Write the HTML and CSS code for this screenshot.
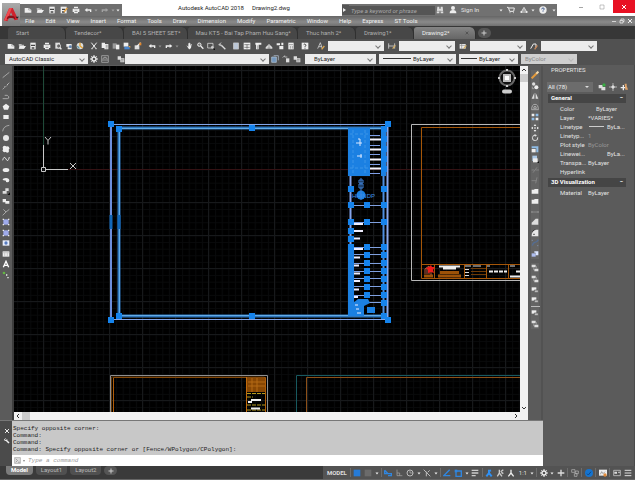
FILE: index.html
```html
<!DOCTYPE html>
<html lang="en">
<head>
<meta charset="utf-8">
<title>Autodesk AutoCAD 2018 - Drawing2.dwg</title>
<link rel="stylesheet" href="styles.css">
</head>
<body>
<svg class="defs" aria-hidden="true">
  <defs>
    <symbol id="new" viewBox="0 0 12 12"><path d="M1 3h6l4 3v4H1z" fill="#eee"/><path d="M7 3v3h4" stroke="#999" fill="none"/></symbol>
    <symbol id="open" viewBox="0 0 12 12"><path d="M1 3h4l1 1h3v2h2L9 10H2z" fill="#bbb"/><path d="M3 6h9l-3 4H1z" fill="#eee"/></symbol>
    <symbol id="save" viewBox="0 0 12 12"><path d="M2 1h8v10H2z" fill="#eee"/><path d="M3 4h6v2H3zM4 8h4v2H4z" fill="#444"/></symbol>
    <symbol id="saveas" viewBox="0 0 12 12"><path d="M1 1h9v10H1z" fill="#eee"/><path d="M3 4h5v2H3zM3 8h4v2H3z" fill="#444"/><path d="M6 9l5-6" stroke="#e7a03c" stroke-width="2"/></symbol>
    <symbol id="print" viewBox="0 0 12 12"><path d="M3 1h6v3h2v5H9v2H3V9H1V4h2z" fill="#eee"/><path d="M3 4h6M4 8h4" stroke="#555"/></symbol>
    <symbol id="preview" viewBox="0 0 12 12"><path d="M2 1h7v9H2z" fill="#ddd"/><circle cx="7" cy="6" r="3" fill="#666" stroke="#eee"/><path d="M9 8l2 3" stroke="#eee" stroke-width="2"/></symbol>
    <symbol id="publish" viewBox="0 0 12 12"><path d="M2 3h8v4H2zM4 8h6v3H4z" fill="#eee"/><circle cx="8" cy="7" r="2" fill="#5d82b0"/></symbol>
    <symbol id="dwf" viewBox="0 0 12 12"><circle cx="6" cy="6" r="5" fill="#ddd"/><path d="M6 1v5l4 3" stroke="#e0a030" stroke-width="2" fill="none"/><path d="M2 6l3 4" stroke="#69a" stroke-width="2"/></symbol>
    <symbol id="cut" viewBox="0 0 12 12"><path d="M2 1l7 9M10 1L3 10" stroke="#eee" stroke-width="1.5"/><path d="M2 10h2M8 10h2" stroke="#ccc" stroke-width="2"/></symbol>
    <symbol id="copy" viewBox="0 0 12 12"><path d="M1 1h5v8H1zM6 3h5v8H5z" fill="#eee"/><path d="M7 5h3M7 7h3M7 9h3" stroke="#777"/></symbol>
    <symbol id="paste" viewBox="0 0 12 12"><path d="M1 2h6v8H1z" fill="#999"/><path d="M6 4h5v7H6z" fill="#eee"/></symbol>
    <symbol id="match" viewBox="0 0 12 12"><path d="M1 1h7v6H1z" fill="#eee"/><path d="M2 7h8v4H2z" fill="#4a87d0"/><path d="M8 6h3v3" fill="#e8a94a"/></symbol>
    <symbol id="block" viewBox="0 0 12 12"><path d="M1 5h7v6H1z" fill="#ddd"/><path d="M4 7l6-6" stroke="#eee" stroke-width="2"/><path d="M8 1h3v4H8z" fill="#e2882e"/></symbol>
    <symbol id="undo" viewBox="0 0 12 12"><path d="M1 6l4-3v2h6v4H9V7H5v2z" fill="#eee"/></symbol>
    <symbol id="redo" viewBox="0 0 12 12"><path d="M11 6L7 3v2H1v4h2V7h4v2z" fill="#eee"/></symbol>
    <symbol id="pan" viewBox="0 0 12 12"><path d="M2 5l3 2V2h1v3-4h1v4-3h1v4l1-3h1l-1 6-2 2H6z" fill="#eee"/></symbol>
    <symbol id="zoom" viewBox="0 0 12 12"><circle cx="5" cy="4" r="2.500" fill="#777" stroke="#eee" stroke-width="1.500"/><path d="M7 6l4 4" stroke="#eee" stroke-width="2"/></symbol>
    <symbol id="zwin" viewBox="0 0 12 12"><path d="M1 2h8v7H1z" fill="none" stroke="#eee"/><circle cx="8" cy="8" r="2" fill="#ccc"/><path d="M12 9v3H9z" fill="#111"/></symbol>
    <symbol id="zprev" viewBox="0 0 12 12"><path d="M5 1L1 4l4 2M2 4h3" fill="none" stroke="#eee"/><path d="M5 5l6 6" stroke="#ddd" stroke-width="2"/></symbol>
    <symbol id="sheet" viewBox="0 0 12 12"><path d="M2 1h8v10H2z" fill="#eee"/><path d="M3 3h6M3 6h6M3 9h6" stroke="#5878a8"/></symbol>
    <symbol id="dc" viewBox="0 0 12 12"><path d="M1 1h10v10H1z" fill="#eee"/><path d="M2 4h8M2 8h8M6 4v6" stroke="#555"/></symbol>
    <symbol id="palette" viewBox="0 0 12 12"><path d="M2 1h9v3H7v7H3V4H2z" fill="#eee"/><path d="M5 5v6" stroke="#888"/></symbol>
    <symbol id="markup" viewBox="0 0 12 12"><path d="M1 8l5-5 5 5v2H1z" fill="#ddd"/><path d="M4 9h4M6 5v2" stroke="#555"/></symbol>
    <symbol id="ssm" viewBox="0 0 12 12"><path d="M1 2h5v3H1zM5 6h6v5H5zM8 1h3v4H8z" fill="#eee"/></symbol>
    <symbol id="calc" viewBox="0 0 12 12"><path d="M2 1h8v10H2z" fill="#eee"/><path d="M3 4h6M5 6v4M8 6v4" stroke="#777"/></symbol>
    <symbol id="helpbox" viewBox="0 0 12 12"><path d="M1 1h10v10H1z" fill="#eee"/><path d="M4 4q2-2 3 0t-1 3v1M6 9v1" stroke="#444" stroke-width="1.500" fill="none"/></symbol>
    <symbol id="astyle" viewBox="0 0 12 12"><path d="M1 10l4-9 3 9M3 7h4" fill="none" stroke="#eee"/><path d="M7 11l4-5" stroke="#dca64d" stroke-width="2"/></symbol>
    <symbol id="dimstyle" viewBox="0 0 12 12"><path d="M1 2v8M10 2v8M1 6h9" fill="none" stroke="#eee"/><path d="M7 10l4-5" stroke="#d5b067" stroke-width="2"/></symbol>
    <symbol id="tblstyle" viewBox="0 0 12 12"><path d="M1 3h9v7H1z" fill="#eee"/><path d="M1 5h9M4 3v7" stroke="#888"/><path d="M7 10l4-5" stroke="#d5b067" stroke-width="2"/></symbol>
    <symbol id="mldstyle" viewBox="0 0 12 12"><path d="M1 10l4-7h4v5" fill="none" stroke="#eee" stroke-width="1.500"/><path d="M7 11l4-6" stroke="#c9885a" stroke-width="2"/></symbol>
    <symbol id="gear" viewBox="0 0 12 12"><circle cx="6" cy="6" r="3" fill="none" stroke="#eee" stroke-width="2"/><path d="M6 0v3M6 9v3M0 6h3M9 6h3M2 2l2 2M8 8l2 2M10 2L8 4M4 8l-2 2" stroke="#eee" stroke-width="1.500"/></symbol>
    <symbol id="frame" viewBox="0 0 12 12"><path d="M1 1h10v10H1z" fill="none" stroke="#bbb"/><path d="M3 9V5l3-2 3 2v4M6 5v4" fill="none" stroke="#ccc"/></symbol>
    <symbol id="layers" viewBox="0 0 12 12"><path d="M1 2h5v5H1zM5 5h6v6H5z" fill="#ddd"/><path d="M6 7h4M6 9h4" stroke="#777"/></symbol>
    <symbol id="layerblue" viewBox="0 0 12 12"><path d="M1 3h7v8H1z" fill="#7397bd" stroke="#bcd"/><path d="M4 1h7v7" fill="none" stroke="#bcd"/></symbol>
    <symbol id="layerprev" viewBox="0 0 12 12"><path d="M6 5h5v6H6z" fill="#ddd"/><path d="M1 4l3-3v2h4" stroke="#ddd" fill="none"/></symbol>
    <symbol id="line" viewBox="0 0 12 12"><path d="M1 10l10-8" stroke="#ccc"/></symbol>
    <symbol id="cline" viewBox="0 0 12 12"><path d="M1 11l3-3M9 3l2-2M6 6h1" stroke="#ccc"/><path d="M4 7h1M8 4h1" stroke="#eee" stroke-width="2"/></symbol>
    <symbol id="pline" viewBox="0 0 12 12"><path d="M1 10h7q3 0 2-3-1-3-6-2" fill="none" stroke="#ccc"/></symbol>
    <symbol id="polygon" viewBox="0 0 12 12"><path d="M6 1l5 4-2 5H3L1 5z" fill="#eee"/></symbol>
    <symbol id="rect" viewBox="0 0 12 12"><path d="M2 3h8v6H2z" fill="#eee"/></symbol>
    <symbol id="arc" viewBox="0 0 12 12"><path d="M1 11q1-8 10-9" fill="none" stroke="#ccc"/></symbol>
    <symbol id="circle" viewBox="0 0 12 12"><circle cx="6" cy="6" r="4.500" fill="#e8e8e8"/></symbol>
    <symbol id="cloud" viewBox="0 0 12 12"><circle cx="4" cy="4" r="3" fill="#eee"/><circle cx="8" cy="5" r="3" fill="#eee"/><circle cx="4" cy="8" r="3" fill="#eee"/><circle cx="8" cy="9" r="2.500" fill="#eee"/></symbol>
    <symbol id="spline" viewBox="0 0 12 12"><path d="M1 8q2-8 5-2t5-3" fill="none" stroke="#ddd" stroke-width="1.500"/></symbol>
    <symbol id="ellipse" viewBox="0 0 12 12"><ellipse cx="6" cy="6" rx="5" ry="3" fill="#eee"/></symbol>
    <symbol id="earc" viewBox="0 0 12 12"><path d="M1 6q0-3 5-3t5 4q-1 3-5 2V7z" fill="#eee"/></symbol>
    <symbol id="insert" viewBox="0 0 12 12"><path d="M1 6h6v4H1zM5 2h5v4H5z" fill="#ddd"/><path d="M12 8v4H8z" fill="#111"/></symbol>
    <symbol id="mkblock" viewBox="0 0 12 12"><path d="M1 3h5v5H1zM5 6h6v4H5z" fill="#eee"/></symbol>
    <symbol id="point" viewBox="0 0 12 12"><path d="M2 2l4 4 5-4M6 6l-5 5" fill="none" stroke="#ccc"/></symbol>
    <symbol id="hatch" viewBox="0 0 12 12"><path d="M2 2h8v8H2z" fill="#9fabeb"/><path d="M1 1h2v2H1zM9 1h2v2H9zM1 9h2v2H1zM9 9h2v2H9z" fill="#eee"/></symbol>
    <symbol id="region" viewBox="0 0 12 12"><path d="M1 2h10v8H1z" fill="#e8eefc"/><circle cx="6" cy="6" r="2.500" fill="#567bc0"/></symbol>
    <symbol id="table" viewBox="0 0 12 12"><path d="M1 2h10v8H1z" fill="#eee"/><path d="M1 4h10M4 4v6M8 4v6" stroke="#bbb"/></symbol>
    <symbol id="mtext" viewBox="0 0 12 12"><path d="M2 11l4-9 4 9M3 8h6" fill="none" stroke="#fff" stroke-width="2"/></symbol>
    <symbol id="addsel" viewBox="0 0 12 12"><circle cx="3" cy="3" r="2" fill="#64b644"/><path d="M6 5h2v2H6zM8 9h2v2H8z" fill="#eee"/></symbol>
    <symbol id="erase" viewBox="0 0 12 12"><path d="M1 11l8-8" stroke="#e39a3c" stroke-width="3"/><path d="M8 4l3-3" stroke="#f3dcb0" stroke-width="3"/></symbol>
    <symbol id="copyobj" viewBox="0 0 12 12"><circle cx="4" cy="3" r="2.500" fill="#ddd"/><circle cx="8" cy="8" r="3" fill="#eee"/><path d="M2 7v3h3" stroke="#bbb" fill="none"/></symbol>
    <symbol id="mirror" viewBox="0 0 12 12"><path d="M5 1v9H1zM7 1v9h4z" fill="#ddd"/></symbol>
    <symbol id="offset" viewBox="0 0 12 12"><path d="M1 10h10q0-8-5-8t-5 8M4 8q0-3 2-3t2 3z" fill="none" stroke="#ccc"/></symbol>
    <symbol id="array" viewBox="0 0 12 12"><path d="M1 1h4v4H1zM7 7h4v4H7z" fill="#eee"/><path d="M7 1h4v4H7zM1 7h4v4H1z" fill="#8fbde8"/></symbol>
    <symbol id="move" viewBox="0 0 12 12"><path d="M6 0l2 3H4zM6 12l2-3H4zM0 6l3-2v4zM12 6L9 4v4zM5 5h2v2H5z" fill="#eee"/></symbol>
    <symbol id="rotate" viewBox="0 0 12 12"><path d="M7 2a4 4 0 1 0 3 3" fill="none" stroke="#ddd" stroke-width="1.500"/><path d="M5 0l4 2-3 2z" fill="#ddd"/></symbol>
    <symbol id="scale" viewBox="0 0 12 12"><path d="M1 2h10v9H8V5H1z" fill="#8ebbe4"/><path d="M1 6h6v5H1z" fill="#eee"/></symbol>
    <symbol id="stretch" viewBox="0 0 12 12"><path d="M2 1h7v8H2z" fill="#aac7e5"/><path d="M3 5h7v6H3z" fill="#eee"/><path d="M12 9v3H9z" fill="#111"/></symbol>
    <symbol id="trim" viewBox="0 0 12 12"><path d="M1 6h4M7 6h5M3 10l6-8" stroke="#929292"/></symbol>
    <symbol id="extend" viewBox="0 0 12 12"><path d="M1 7h7M9 2L7 11" stroke="#929292"/></symbol>
    <symbol id="break" viewBox="0 0 12 12"><path d="M1 4h3l2-1h5v7H1z" fill="#eee"/></symbol>
    <symbol id="join" viewBox="0 0 12 12"><path d="M0 6h4M5 6h2M8 6h4" stroke="#bbb"/></symbol>
    <symbol id="chamfer" viewBox="0 0 12 12"><path d="M1 10V7l6-6h4v9z" fill="#ddd"/></symbol>
    <symbol id="fillet" viewBox="0 0 12 12"><path d="M1 11q0-9 7-10h3v10z" fill="#e8e8e8"/><path d="M2 4l3-3M3 8h3" stroke="#222"/></symbol>
    <symbol id="blend" viewBox="0 0 12 12"><path d="M2 10q1-5 4-5t5-4" fill="none" stroke="#536d94" stroke-width="2"/><path d="M1 2h2M9 10h2" stroke="#89b"/></symbol>
    <symbol id="explode" viewBox="0 0 12 12"><path d="M1 5h6v5H1z" fill="#aebef0"/><path d="M5 2h6v6H7V4H5z" fill="#dde6ff"/></symbol>
    <symbol id="front" viewBox="0 0 12 12"><path d="M1 1h6v4H1zM5 7h6v4H5z" fill="#ddd"/><path d="M4 5v4h2M8 3v4" fill="none" stroke="#aaa"/></symbol>
    <symbol id="back" viewBox="0 0 12 12"><path d="M1 2h7v5H1z" fill="#eee"/><path d="M5 6h6v4H5z" fill="#bbb" stroke="#555"/></symbol>
    <symbol id="tdown" viewBox="0 0 12 12"><path d="M3 5h6l-3 4z" fill="#eee"/></symbol>
    <symbol id="binoc" viewBox="0 0 12 12"><path d="M2 1h3v3h2V1h3l1 10H7V7H5v4H1z" fill="#ddd"/><path d="M2 8h2M8 8h2" stroke="#666"/></symbol>
    <symbol id="user" viewBox="0 0 12 12"><circle cx="6" cy="3" r="3" fill="#eee"/><path d="M1 11q0-5 5-5t5 5z" fill="#eee"/></symbol>
    <symbol id="cart" viewBox="0 0 12 12"><path d="M0 2h2l2 6h6l1-5H3M4 10h1M9 10h1" fill="none" stroke="#eee" stroke-width="1.500"/></symbol>
    <symbol id="share" viewBox="0 0 12 12"><path d="M6 2l4 7H2zM4 6h4" fill="none" stroke="#ddd" stroke-width="1.500"/><circle cx="2" cy="9" r="1.500" fill="#eee"/><circle cx="10" cy="9" r="1.500" fill="#eee"/></symbol>
    <symbol id="help" viewBox="0 0 12 12"><circle cx="6" cy="6" r="5.500" fill="#eee"/><path d="M4 5q0-2 2-2t2 1.500L6 7M6 8v1" fill="none" stroke="#4a6494" stroke-width="1.500"/></symbol>
    <symbol id="min" viewBox="0 0 12 12"><path d="M2 7h8" stroke="currentColor" stroke-width="1.500"/></symbol>
    <symbol id="max" viewBox="0 0 12 12"><path d="M2 2h8v8H2z" fill="none" stroke="currentColor"/></symbol>
    <symbol id="restore" viewBox="0 0 12 12"><path d="M2 5h6v5H2zM4 5V2h6v5H8" fill="none" stroke="currentColor" stroke-width="1.500"/></symbol>
    <symbol id="x" viewBox="0 0 12 12"><path d="M2 2l8 8M10 2l-8 8" stroke="currentColor" stroke-width="2"/></symbol>
    <symbol id="plus" viewBox="0 0 12 12"><path d="M6 1v10M1 6h10" stroke="currentColor" stroke-width="2"/></symbol>
    <symbol id="wrench" viewBox="0 0 12 12"><path d="M4 4l6 6" stroke="#eee" stroke-width="3"/><path d="M1 4q3 3 5-1M3 1q-3 1-1 4" fill="none" stroke="#eee" stroke-width="2"/></symbol>
    <symbol id="prompt" viewBox="0 0 12 12"><path d="M1 1h10v10H1z" fill="#ddd" stroke="#999"/><path d="M3 3l3 3-3 3M7 9h3" fill="none" stroke="#777"/></symbol>
    <symbol id="gridon" viewBox="0 0 12 12"><path d="M1 1h10v10H1z" fill="#267bd8"/></symbol>
    <symbol id="snap" viewBox="0 0 12 12"><path d="M1 1h10v10H1z" fill="#6b6b6b"/></symbol>
    <symbol id="infer" viewBox="0 0 12 12"><path d="M1 2v5h10v3H6M1 2l5 5" fill="none" stroke="#2f86e0" stroke-width="2"/></symbol>
    <symbol id="ortho" viewBox="0 0 12 12"><path d="M3 1v9h8M3 6h4v4" fill="none" stroke="#aaa"/></symbol>
    <symbol id="polar" viewBox="0 0 12 12"><circle cx="6" cy="6" r="4.500" fill="none" stroke="#bbb" stroke-width="1.500"/><path d="M6 6V3M6 6h5" stroke="#bbb"/></symbol>
    <symbol id="iso" viewBox="0 0 12 12"><path d="M1 1l10 10M5 4v7M7 5l3-3" fill="none" stroke="#bbb" stroke-width="1.500"/></symbol>
    <symbol id="otrack" viewBox="0 0 12 12"><path d="M10 1L1 10h10" fill="none" stroke="#2f86e0" stroke-width="2"/></symbol>
    <symbol id="osnap" viewBox="0 0 12 12"><path d="M3 3h8v8H3z" fill="none" stroke="#2f86e0" stroke-width="2"/><path d="M1 1h4v4H1z" fill="#2f86e0"/></symbol>
    <symbol id="lw" viewBox="0 0 12 12"><path d="M1 2h10M1 6h10M1 10h6" stroke="#ccc" stroke-width="2"/></symbol>
    <symbol id="annob" viewBox="0 0 12 12"><path d="M6 1v5l-4 5M6 6l4 5M6 3l3-1" fill="none" stroke="#2f90f4" stroke-width="3"/></symbol>
    <symbol id="anno" viewBox="0 0 12 12"><path d="M5 1v5l-3 5M5 6l4 5M7 4l4-3M8 5l3 2" fill="none" stroke="#ccc" stroke-width="2"/></symbol>
    <symbol id="annow" viewBox="0 0 12 12"><path d="M6 1v5l-4 5M6 6l4 5" fill="none" stroke="#eee" stroke-width="2"/></symbol>
    <symbol id="units" viewBox="0 0 12 12"><path d="M1 1h5v4H1zM7 3h4v4H7zM5 7h4v4H5z" fill="none" stroke="#bbb"/></symbol>
    <symbol id="accel" viewBox="0 0 12 12"><circle cx="6" cy="6" r="6" fill="#1573ce"/><path d="M3 7l2 2 4-5" stroke="#0b488a" fill="none" stroke-width="1.500"/></symbol>
    <symbol id="perf" viewBox="0 0 12 12"><path d="M0 1h12v9H0z" fill="#eee"/><path d="M2 8l2-4 2 3 3-3" stroke="#777" fill="none"/><circle cx="9" cy="9" r="2.500" fill="#e08a3a"/></symbol>
    <symbol id="clean" viewBox="0 0 12 12"><path d="M1 2h10v8H1z" fill="none" stroke="#ddd"/><path d="M2 4h4v3H2zM8 4h2v2H8z" fill="#ddd"/></symbol>
    <symbol id="menu" viewBox="0 0 12 12"><path d="M1 2h10M1 6h10M1 10h10" stroke="#ddd" stroke-width="1.500"/></symbol>
    <symbol id="qsel" viewBox="0 0 12 12"><path d="M1 3h6v5H1zM5 6h6v5H5z" fill="#ddd"/><circle cx="9" cy="3" r="2.500" fill="#37ad42"/></symbol>
    <symbol id="pick" viewBox="0 0 12 12"><path d="M6 0v12M0 6h12" stroke="#ddd"/><path d="M6 3l3 3-3 3-3-3z" fill="#ddd"/></symbol>
    <symbol id="pickadd" viewBox="0 0 12 12"><path d="M5 3v8M1 7h9" stroke="#eee" stroke-width="2"/><path d="M7 1h3v3l2 6H8z" fill="#e0a46a"/></symbol>
  </defs>
</svg>

<div class="app">
  <header class="header">
    <button class="app-button" aria-label="Application menu">
      <svg viewBox="0 0 18 20"><path d="M1 16L7 2h4l6 13-4 1-4-9-4 10z" fill="#d0232e"/><path d="M7 2h3L5 15l-4 2z" fill="#f04a50"/><path d="M5 12q4-3 8 0l1 3q-5-3-10 0z" fill="#8c1018"/><path d="M14 12h4l-2 2z" fill="#222"/></svg>
    </button>
    <div class="title-row">
      <div class="quick-access">
        <button aria-label="New"><svg><use href="#new"/></svg></button>
        <button aria-label="Open"><svg><use href="#open"/></svg></button>
        <button aria-label="Save"><svg><use href="#save"/></svg></button>
        <button aria-label="Save as"><svg><use href="#saveas"/></svg></button>
        <button aria-label="Plot"><svg><use href="#print"/></svg></button>
        <button aria-label="Undo"><svg><use href="#undo"/></svg></button>
        <button class="caret dim" aria-label="Undo list"><svg><use href="#tdown"/></svg></button>
        <button class="dim" aria-label="Redo"><svg><use href="#redo"/></svg></button>
        <button class="caret dim" aria-label="Redo list"><svg><use href="#tdown"/></svg></button>
        <button class="caret" aria-label="Customize"><svg><use href="#tdown"/></svg></button>
      </div>
      <h1 class="title"><span>Autodesk AutoCAD 2018</span><span>Drawing2.dwg</span></h1>
      <div class="infocenter">
        <button class="play" aria-label="Expand search"></button>
        <input class="search" type="text" aria-label="Search help" placeholder="Type a keyword or phrase">
        <button aria-label="Search"><svg><use href="#binoc"/></svg></button>
        <button class="wide" aria-label="Account"><svg><use href="#user"/></svg></button>
        <a class="signin" href="#">Sign In</a>
        <button class="caret" aria-label="Account menu"><svg><use href="#tdown"/></svg></button>
        <button class="wide" aria-label="Store"><svg><use href="#cart"/></svg></button>
        <button aria-label="A360"><svg><use href="#share"/></svg></button>
        <button class="caret" aria-label="A360 menu"><svg><use href="#tdown"/></svg></button>
        <button class="wide" aria-label="Help"><svg><use href="#help"/></svg></button>
        <button class="caret" aria-label="Help menu"><svg><use href="#tdown"/></svg></button>
      </div>
      <div class="window-controls">
        <button aria-label="Minimize"><svg><use href="#min"/></svg></button>
        <button aria-label="Maximize"><svg><use href="#max"/></svg></button>
        <button class="close" aria-label="Close"><svg><use href="#x"/></svg></button>
      </div>
    </div>
    <nav class="menubar">
      <a href="#">File</a><a href="#">Edit</a><a href="#">View</a><a href="#">Insert</a><a href="#">Format</a><a href="#">Tools</a><a href="#">Draw</a><a href="#">Dimension</a><a href="#">Modify</a><a href="#">Parametric</a><a href="#">Window</a><a href="#">Help</a><a href="#">Express</a><a href="#">ST Tools</a>
      <div class="doc-controls">
        <button aria-label="Minimize drawing"><svg><use href="#min"/></svg></button>
        <button aria-label="Restore drawing"><svg><use href="#restore"/></svg></button>
        <button aria-label="Close drawing"><svg><use href="#x"/></svg></button>
      </div>
    </nav>
  </header>

  <nav class="tabs">
    <a class="tab" href="#">Start</a>
    <a class="tab" href="#">Tendecor*</a>
    <a class="tab" href="#">BAI 5 SHEET SET*</a>
    <a class="tab" href="#">Mau KT5 - Bai Tap Pham Huu Sang*</a>
    <a class="tab" href="#">Thuc hanh 2*</a>
    <a class="tab" href="#">Drawing1*</a>
    <a class="tab active" href="#">Drawing2*<svg><use href="#x"/></svg></a>
    <button class="add" aria-label="New drawing"><svg><use href="#plus"/></svg></button>
  </nav>

  <div class="toolbar">
    <div class="group">
      <button aria-label="New"><svg><use href="#new"/></svg></button>
      <button aria-label="Open"><svg><use href="#open"/></svg></button>
      <button aria-label="Save"><svg><use href="#save"/></svg></button>
    </div>
    <div class="group">
      <button aria-label="Plot"><svg><use href="#print"/></svg></button>
      <button aria-label="Preview"><svg><use href="#preview"/></svg></button>
      <button aria-label="Publish"><svg><use href="#publish"/></svg></button>
      <button aria-label="3D DWF"><svg><use href="#dwf"/></svg></button>
    </div>
    <div class="group">
      <button aria-label="Cut"><svg><use href="#cut"/></svg></button>
      <button aria-label="Copy"><svg><use href="#copy"/></svg></button>
      <button aria-label="Paste"><svg><use href="#paste"/></svg></button>
      <button aria-label="Match properties"><svg><use href="#match"/></svg></button>
      <button aria-label="Block editor"><svg><use href="#block"/></svg></button>
    </div>
    <div class="group">
      <button aria-label="Undo"><svg><use href="#undo"/></svg></button>
      <button class="caret dim" aria-label="Undo list"><svg><use href="#tdown"/></svg></button>
      <button aria-label="Redo"><svg><use href="#redo"/></svg></button>
      <button class="caret dim" aria-label="Redo list"><svg><use href="#tdown"/></svg></button>
    </div>
    <div class="group">
      <button aria-label="Pan"><svg><use href="#pan"/></svg></button>
      <button aria-label="Zoom"><svg><use href="#zoom"/></svg></button>
      <button aria-label="Zoom window"><svg><use href="#zwin"/></svg></button>
      <button aria-label="Zoom previous"><svg><use href="#zprev"/></svg></button>
    </div>
    <div class="group">
      <button aria-label="Properties"><svg><use href="#sheet"/></svg></button>
      <button aria-label="Design center"><svg><use href="#dc"/></svg></button>
      <button aria-label="Tool palettes"><svg><use href="#palette"/></svg></button>
      <button aria-label="Markup"><svg><use href="#markup"/></svg></button>
      <button aria-label="Sheet set manager"><svg><use href="#ssm"/></svg></button>
      <button aria-label="Calculator"><svg><use href="#calc"/></svg></button>
    </div>
    <div class="group">
      <button aria-label="Help"><svg><use href="#helpbox"/></svg></button>
    </div>
    <div class="group">
      <button class="wide" aria-label="Text style"><svg><use href="#astyle"/></svg></button>
      <label class="combo"><select aria-label="Text style name"><option></option></select></label>
      <button class="wide" aria-label="Dimension style"><svg><use href="#dimstyle"/></svg></button>
      <label class="combo"><select aria-label="Dimension style name"><option></option></select></label>
      <button class="wide" aria-label="Table style"><svg><use href="#tblstyle"/></svg></button>
      <label class="combo"><select aria-label="Table style name"><option></option></select></label>
      <button class="wide" aria-label="Multileader style"><svg><use href="#mldstyle"/></svg></button>
      <label class="combo"><select aria-label="Multileader style name"><option></option></select></label>
    </div>
  </div>

  <div class="toolbar">
    <div class="group">
      <label class="combo workspace"><select aria-label="Workspace"><option>AutoCAD Classic</option></select></label>
      <button aria-label="Workspace settings"><svg><use href="#gear"/></svg></button>
      <button aria-label="My workspace"><svg><use href="#frame"/></svg></button>
    </div>
    <div class="group">
      <button class="wide" aria-label="Layer properties"><svg><use href="#layers"/></svg></button>
      <label class="combo layer"><select aria-label="Layer"><option></option></select></label>
      <button aria-label="Make layer current"><svg><use href="#layerblue"/></svg></button>
      <button aria-label="Layer previous"><svg><use href="#layerprev"/></svg></button>
      <button aria-label="Layer states"><svg><use href="#layers"/></svg></button>
    </div>
    <div class="group spaced">
      <label class="combo color"><select aria-label="Color"><option>ByLayer</option></select></label>
      <label class="combo linetype"><span class="sample"></span><select aria-label="Linetype"><option>ByLayer</option></select></label>
      <label class="combo weight"><span class="sample"></span><select aria-label="Lineweight"><option>ByLayer</option></select></label>
      <label class="combo disabled"><select aria-label="Plot style" disabled><option>ByColor</option></select></label>
    </div>
  </div>

  <main class="main">
    <div class="work">
      <div class="workspace-row">
        <div class="draw-bar">
          <div class="stack draw">
            <button aria-label="Line"><svg><use href="#line"/></svg></button>
            <button aria-label="Construction line"><svg><use href="#cline"/></svg></button>
            <button aria-label="Polyline"><svg><use href="#pline"/></svg></button>
            <button aria-label="Polygon"><svg><use href="#polygon"/></svg></button>
            <button aria-label="Rectangle"><svg><use href="#rect"/></svg></button>
            <button aria-label="Arc"><svg><use href="#arc"/></svg></button>
            <button aria-label="Circle"><svg><use href="#circle"/></svg></button>
            <button aria-label="Revision cloud"><svg><use href="#cloud"/></svg></button>
            <button aria-label="Spline"><svg><use href="#spline"/></svg></button>
            <button aria-label="Ellipse"><svg><use href="#ellipse"/></svg></button>
            <button aria-label="Ellipse arc"><svg><use href="#earc"/></svg></button>
            <button aria-label="Insert block"><svg><use href="#insert"/></svg></button>
            <button aria-label="Make block"><svg><use href="#mkblock"/></svg></button>
            <button aria-label="Point"><svg><use href="#point"/></svg></button>
            <button aria-label="Hatch"><svg><use href="#hatch"/></svg></button>
            <button aria-label="Gradient"><svg><use href="#hatch"/></svg></button>
            <button aria-label="Region"><svg><use href="#region"/></svg></button>
            <button aria-label="Table"><svg><use href="#table"/></svg></button>
            <button aria-label="Multiline text"><svg><use href="#mtext"/></svg></button>
            <button aria-label="Add selected"><svg><use href="#addsel"/></svg></button>
          </div>
        </div>
        <div class="viewport">
          <svg class="drawing" viewBox="14 66 506 346" preserveAspectRatio="xMinYMin slice">
            <defs>
              <pattern id="minor" x="43.500" y="169.500" width="6.600" height="6.600" patternUnits="userSpaceOnUse"><path d="M0 .5h6.600M.5 0v6.600" stroke="#090a0b"/></pattern>
              <pattern id="major" x="43" y="169" width="33" height="33" patternUnits="userSpaceOnUse"><path d="M0 .5h33M.5 0v33" stroke="#17191b"/></pattern>
              <path id="g" d="M-3-3h6v6h-6z" fill="#1583ec"/>
            </defs>
            <rect x="14" y="66" width="506" height="346" fill="#000"/>
            <rect x="14" y="66" width="506" height="346" fill="url(#minor)"/>
            <rect x="14" y="66" width="506" height="346" fill="url(#major)"/>
            <path d="M43.500 66v80" stroke="#1f4a38"/>
            <path d="M68 169.500h452" stroke="#351214"/>
            <path d="M43.500 145v22M46 169.500h22M41.500 167.500h4v4h-4z" stroke="#c8c8c8" fill="none"/>
            <path d="M45 137l3 3.500 3-3.500M48 140.500v4M70 163l6 6M76 163l-6 6" stroke="#c8c8c8" fill="none"/>

            <g fill="none">
              <path d="M520 124.500H411.500v156H520" stroke="#b8b8b8"/>
              <path d="M520 127.500H421.500v151H520M421.500 264.500H520M434.500 264v14M464.500 264v14M486.500 264v14M508.500 264v14" stroke="#a55608"/>
              <path d="M471 268.500h15M471 271.500h15M471 274.500h15" stroke="#6e3a06"/>
              <path d="M439 266.500h21M443 268.500h13" stroke="#eee" stroke-width="2"/>
              <path d="M440 272.500h19M438 276h23M424 276h9" stroke="#9c5208" stroke-width="3"/>
              <path d="M465 266h6M473 266h8M465 269.500h4M465 272.500h4M465 275.500h4M487 266h3M510 266h5" stroke="#ddd"/>
              <path d="M489 271.500h18M516 271.500h4" stroke="#eee" stroke-width="2" stroke-dasharray="4 1"/>
              <path d="M510 276.500h10" stroke="#eee" stroke-width="2"/>
              <path d="M425 274v-5l4-3v8M427 268v6M431 270v5" stroke="#b85b3a"/>
            </g>
            <path d="M431 265l1 2 3 0-2 3 1 3-3-1-3 1 0-3-2-2 3-1z" fill="#ef1c1c"/>

            <g fill="none">
              <path d="M110.500 412v-36.500h157V412" stroke="#8f8f8f"/>
              <path d="M113.500 412v-34.500h152V412" stroke="#b05c08"/>
              <path d="M111.500 412v-35h153" stroke="#5b3408"/>
              <path d="M246.500 377v35" stroke="#c06a0c"/>
            </g>
            <path d="M247 378h18v14h-18z" fill="#874704"/>
            <path d="M248 382h17M248 386h17M252 378v14M257 378v14" stroke="#b46a14" fill="none"/>
            <path d="M247 393.500h18M247 397h6M247 405h18M247 410h18" stroke="#b59a1c" stroke-dasharray="4 1"/>
            <path d="M251 400h10M248 402h4M251 408.500h9" stroke="#eee" stroke-width="2"/>
            <path d="M296.500 412v-36.500H520" fill="none" stroke="#17595f"/>
            <path d="M306.500 412v-34.500H520" fill="none" stroke="#8c5018"/>

            <g fill="none">
              <path d="M111 124.500h277M111 319.500h277" stroke="#82a6ea"/>
              <path d="M111 124v196" stroke="#6d8fdc" stroke-width="2"/>
              <path d="M119 128h265M119 316h265M119 128v188" stroke="#2e76bd" stroke-width="3"/>
              <path d="M119 128.500h265M119 315.500h265M119.500 128v188" stroke="#62abe5"/>
              <path d="M387.500 124v196" stroke="#8aa8ec" stroke-width="2"/>
              <path d="M383.500 128v188" stroke="#4e8fe0" stroke-width="2"/>
              <path d="M350.500 176v70" stroke="#86a4ea" stroke-width="2"/>
              <path d="M350 205.500h34M350 222.500h34M350 247.500h34M350 254.500h34M350 263.500h34M350 271.500h34M350 278.500h34M350 286.500h34M350 295.500h34M350 302.500h34" stroke="#7fa0e0"/>
              <path d="M370 135.500h10M370 145.500h10M370 154.500h10M370 164.500h10M370 173.500h10" stroke="#7f9fe8"/>
              <path d="M369 139.500h12M369 149.500h12M369 159.500h12M369 168.500h12" stroke="#f4f4ff" stroke-width="2"/>
              <path d="M354 224h9M354 231h9M354 238.500h6M354 249h9M354 257.500h6M354 265.500h5M354 273.500h6M354 281h6M354 289.500h5M354 297h4" stroke="#eef" stroke-width="2"/>
              <path d="M111 215v14M119 215v14" stroke="#1267b8" stroke-width="3"/>
            </g>
            <path d="M348 128h22v48h-22zM348 245h6v71h-6zM353 303l5-4h10l2 4-6 3v10h-11zM367 307h8v6h-8z" fill="#1b80e2"/>
            <path d="M350 134h18M350 168h18M353 130v44M365 130v44" stroke="#3d95e8" stroke-dasharray="3 2"/>
            <path d="M358 139h2v7M356 143h6M357 156h5M361 154v4" stroke="#dce8ff" fill="none"/>
            <path d="M356 309h3M357 313h4M355 305h3" stroke="#eef"/>
            <circle cx="361" cy="195" r="4.500" fill="#1b80e2"/>
            <path d="M361 178v22M359 180h4v3h-4zM359 184h4v4h-4z" stroke="#3f82d8" fill="none"/>
            <text class="stamp" x="352" y="198">HHINDP</text>
            <path d="M381 128h5v48h-5z" fill="#1b80e2"/>
            <use href="#g" x="111" y="124"/><use href="#g" x="119" y="129"/><use href="#g" x="252" y="128"/><use href="#g" x="388" y="124"/>
            <use href="#g" x="111" y="320"/><use href="#g" x="119" y="316"/><use href="#g" x="252" y="316"/><use href="#g" x="388" y="320"/>
            <use href="#g" x="384" y="129"/><use href="#g" x="384" y="139"/><use href="#g" x="384" y="149"/><use href="#g" x="384" y="159"/><use href="#g" x="384" y="169"/>
            <use href="#g" x="351" y="189"/><use href="#g" x="384" y="189"/>
            <use href="#g" x="351" y="205"/><use href="#g" x="367" y="205"/><use href="#g" x="384" y="205"/>
            <use href="#g" x="351" y="222"/><use href="#g" x="367" y="222"/><use href="#g" x="384" y="222"/>
            <use href="#g" x="351" y="231"/><use href="#g" x="351" y="239"/>
            <use href="#g" x="351" y="247"/><use href="#g" x="367" y="247"/><use href="#g" x="384" y="247"/>
            <use href="#g" x="367" y="255"/><use href="#g" x="384" y="255"/>
            <use href="#g" x="367" y="263"/><use href="#g" x="384" y="263"/>
            <use href="#g" x="367" y="271"/><use href="#g" x="384" y="271"/>
            <use href="#g" x="367" y="279"/><use href="#g" x="384" y="279"/>
            <use href="#g" x="367" y="287"/><use href="#g" x="384" y="287"/>
            <use href="#g" x="367" y="295"/><use href="#g" x="384" y="295"/>
            <use href="#g" x="384" y="303"/><use href="#g" x="384" y="316"/>

            <circle cx="507" cy="78" r="7.500" fill="#111" stroke="#666" stroke-width="2"/>
            <path d="M507 69v2M507 85v2M498 78h2M514 78h2" stroke="#ccc" stroke-width="2"/>
            <rect x="503" y="74" width="8" height="8" fill="#bbb"/>
            <rect x="505" y="76" width="4" height="4" fill="#fff"/>
            <rect x="502" y="89.500" width="10" height="4" rx="2" fill="#ccc"/>
          </svg>
          <div class="vscroll"><svg viewBox="0 0 8 8"><path d="M2 5l2-2 2 2"/></svg><span class="thumb"></span><svg class="end" viewBox="0 0 8 8"><path d="M2 3l2 2 2-2"/></svg></div>
          <div class="hscroll"><svg viewBox="0 0 8 8"><path d="M5 2L3 4l2 2"/></svg><span class="thumb"></span><svg class="end" viewBox="0 0 8 8"><path d="M3 2l2 2-2 2"/></svg></div>
        </div>
        <div class="modify-bar">
          <div class="stack modify">
            <button aria-label="Erase"><svg><use href="#erase"/></svg></button>
            <button aria-label="Copy object"><svg><use href="#copyobj"/></svg></button>
            <button aria-label="Mirror"><svg><use href="#mirror"/></svg></button>
            <button aria-label="Offset"><svg><use href="#offset"/></svg></button>
            <button aria-label="Array"><svg><use href="#array"/></svg></button>
            <button aria-label="Move"><svg><use href="#move"/></svg></button>
            <button aria-label="Rotate"><svg><use href="#rotate"/></svg></button>
            <button aria-label="Scale"><svg><use href="#scale"/></svg></button>
            <button aria-label="Stretch"><svg><use href="#stretch"/></svg></button>
            <button aria-label="Trim"><svg><use href="#trim"/></svg></button>
            <button aria-label="Extend"><svg><use href="#extend"/></svg></button>
            <button aria-label="Break at point"><svg><use href="#break"/></svg></button>
            <button aria-label="Break"><svg><use href="#break"/></svg></button>
            <button aria-label="Join"><svg><use href="#join"/></svg></button>
            <button aria-label="Chamfer"><svg><use href="#chamfer"/></svg></button>
            <button aria-label="Fillet"><svg><use href="#fillet"/></svg></button>
            <button aria-label="Blend curves"><svg><use href="#blend"/></svg></button>
            <button aria-label="Explode"><svg><use href="#explode"/></svg></button>
          </div>
          <div class="stack order">
            <button aria-label="Bring to front"><svg><use href="#front"/></svg></button>
            <button aria-label="Send to back"><svg><use href="#front"/></svg></button>
            <button aria-label="Bring above"><svg><use href="#back"/></svg></button>
            <button aria-label="Send under"><svg><use href="#back"/></svg></button>
            <hr>
            <button aria-label="Text to front"><svg><use href="#back"/></svg></button>
            <button aria-label="Hatch to back"><svg><use href="#front"/></svg></button>
          </div>
        </div>
      </div>
      <section class="command">
        <div class="command-side">
          <button aria-label="Close command line"><svg><use href="#x"/></svg></button>
          <button aria-label="Command settings"><svg><use href="#wrench"/></svg></button>
        </div>
        <div class="command-body">
          <div class="history">
            <p>Specify opposite corner:</p>
            <p>Command:</p>
            <p>Command:</p>
            <p>Command: Specify opposite corner or [Fence/WPolygon/CPolygon]:</p>
          </div>
          <div class="entry"><svg><use href="#prompt"/></svg><span class="tick"></span><input type="text" aria-label="Command" placeholder="Type a command"></div>
        </div>
      </section>
    </div>

    <aside class="properties">
      <h2>PROPERTIES</h2>
      <div class="selection">
        <label class="combo dark"><select aria-label="Selected objects"><option>All (78)</option></select></label>
        <button aria-label="Toggle pick add"><svg><use href="#qsel"/></svg></button>
        <button aria-label="Select objects"><svg><use href="#pick"/></svg></button>
        <button aria-label="Quick select"><svg><use href="#pickadd"/></svg></button>
      </div>
      <h3>General<span>−</span></h3>
      <table>
        <tr><th>Color</th><td class="swatch">ByLayer</td></tr>
        <tr><th>Layer</th><td>*VARIES*</td></tr>
        <tr><th>Linetype</th><td><span class="sample"></span>ByLa...</td></tr>
        <tr><th>Linetyp...</th><td class="muted">1</td></tr>
        <tr><th>Plot style</th><td class="muted">ByColor</td></tr>
        <tr><th>Linewei...</th><td><span class="sample blank"></span>ByLa...</td></tr>
        <tr><th>Transpa...</th><td>ByLayer</td></tr>
        <tr><th>Hyperlink</th><td></td></tr>
      </table>
      <h3>3D Visualization<span>−</span></h3>
      <table>
        <tr><th>Material</th><td>ByLayer</td></tr>
      </table>
    </aside>
  </main>

  <footer class="status">
    <nav class="layouts">
      <a class="active" href="#">Model</a>
      <a href="#">Layout1</a>
      <a href="#">Layout2</a>
      <button class="add" aria-label="New layout"><svg><use href="#plus"/></svg></button>
    </nav>
    <div class="status-tools">
      <button class="text bold">MODEL</button>
      <i></i>
      <button aria-label="Grid"><svg><use href="#gridon"/></svg></button>
      <button aria-label="Snap"><svg><use href="#snap"/></svg></button>
      <button class="caret" aria-label="Snap menu"><svg><use href="#tdown"/></svg></button>
      <i></i>
      <button aria-label="Dynamic input"><svg><use href="#infer"/></svg></button>
      <button aria-label="Ortho"><svg><use href="#ortho"/></svg></button>
      <button aria-label="Polar"><svg><use href="#polar"/></svg></button>
      <button class="caret" aria-label="Polar menu"><svg><use href="#tdown"/></svg></button>
      <button aria-label="Isometric"><svg><use href="#iso"/></svg></button>
      <button class="caret" aria-label="Isometric menu"><svg><use href="#tdown"/></svg></button>
      <i></i>
      <button aria-label="Object snap tracking"><svg><use href="#otrack"/></svg></button>
      <button aria-label="Object snap"><svg><use href="#osnap"/></svg></button>
      <button class="caret" aria-label="Object snap menu"><svg><use href="#tdown"/></svg></button>
      <button aria-label="Lineweight"><svg><use href="#lw"/></svg></button>
      <i></i>
      <button aria-label="Annotation visibility"><svg><use href="#annob"/></svg></button>
      <button aria-label="Auto scale"><svg><use href="#anno"/></svg></button>
      <button aria-label="Annotation scale"><svg><use href="#annow"/></svg></button>
      <button class="text scale">1:1</button>
      <button class="caret" aria-label="Scale menu"><svg><use href="#tdown"/></svg></button>
      <i></i>
      <button aria-label="Workspace"><svg><use href="#gear"/></svg></button>
      <button class="caret" aria-label="Workspace menu"><svg><use href="#tdown"/></svg></button>
      <button aria-label="Annotation monitor"><svg><use href="#plus"/></svg></button>
      <i></i>
      <button aria-label="Isolate objects"><svg><use href="#units"/></svg></button>
      <i></i>
      <button aria-label="Hardware acceleration"><svg><use href="#accel"/></svg></button>
      <i></i>
      <button aria-label="Performance"><svg><use href="#perf"/></svg></button>
      <i></i>
      <button aria-label="Clean screen"><svg><use href="#clean"/></svg></button>
      <button aria-label="Customization"><svg><use href="#menu"/></svg></button>
    </div>
  </footer>
</div>
</body>
</html>
```

FILE: styles.css
```css
* { box-sizing: border-box; }

body {
  margin: 0;
  background: #5b5b5b;
  color: #e4e4e4;
  font: 6px/8px Roboto, "Open Sans", sans-serif;
}

.defs { position: absolute; width: 0; height: 0; }

button, input, select {
  margin: 0;
  padding: 0;
  border: 0;
  background: none;
  color: inherit;
  font: inherit;
  outline: 0;
}

a { color: inherit; text-decoration: none; }
h1, h2, h3, p { margin: 0; font-size: inherit; font-weight: 400; }

button {
  display: flex;
  flex: none;
  align-items: center;
  justify-content: center;
  width: 11px;
  height: 10px;
}

button svg { display: block; width: 8px; height: 8px; }
button.caret { width: 6px; }
button.caret svg { width: 6px; height: 6px; }
button.wide { width: 15px; }
button.dim { opacity: .4; }

.app { display: flex; flex-direction: column; min-height: 100vh; }

/* Header */
.header {
  display: grid;
  grid-template-columns: 20px 1fr;
  grid-template-rows: 16px 10px;
  background: #fff;
}

.app-button {
  grid-row: 1 / 3;
  width: 18px;
  height: 23px;
  margin: 3px 0 0 2px;
  background: linear-gradient(#ababab, #7b7b7b);
}
.app-button svg { width: 16px; height: 18px; }

.title-row { display: flex; align-items: flex-start; justify-content: space-between; }

.quick-access {
  display: flex;
  align-items: center;
  gap: 1px;
  height: 12px;
  margin-top: 4px;
  padding: 0 2px;
  background: #6f6f6f;
}
.quick-access .caret { width: 4px; }
.quick-access .caret svg { flex: none; }

.title { display: flex; gap: 8px; margin: 4px auto 0; padding-left: 4px; color: #222; }

.infocenter {
  display: flex;
  align-items: center;
  height: 12px;
  margin-top: 4px;
  background: #717171;
}
.play { width: 7px; background: #555; }
.play::before { border: 2px solid transparent; border-left: 3px solid #eee; content: ""; }
.search { width: 86px; height: 9px; padding: 0 2px; background: #555; font-style: italic; }
.search::placeholder { color: #aaa; opacity: 1; }
.infocenter svg { width: 8px; height: 8px; }
.signin { width: 37px; }

.window-controls { display: flex; margin-left: 14px; color: #888; }
.window-controls button { width: 21px; height: 13px; }
.window-controls svg { width: 6px; height: 6px; }
.window-controls .close { width: 22px; background: #e81123; color: #fff; }

.menubar {
  display: flex;
  align-items: center;
  gap: 11px;
  padding-left: 5px;
  background: linear-gradient(#666, #8a8a8a 60%, #707070);
  color: #f2f2f2;
}
.doc-controls { display: flex; margin-left: auto; padding-right: 1px; color: #eee; }
.doc-controls button { width: 8px; }
.doc-controls svg { width: 6px; height: 6px; }

/* Drawing tabs */
.tabs {
  display: flex;
  align-items: flex-end;
  height: 13px;
  padding-left: 8px;
  background: #373737;
}
.tab {
  display: flex;
  align-items: center;
  justify-content: space-between;
  min-width: 58px;
  height: 12px;
  padding: 0 6px 0 8px;
  border-right: 1px solid #303030;
  border-radius: 3px 6px 0 0;
  background: #474747;
  color: #b0b0b0;
}
.tab.active { min-width: 62px; background: linear-gradient(#858585, #666); color: #eee; }
.tab svg { width: 4px; height: 4px; color: #444; }
.add {
  width: 13px;
  height: 10px;
  border-radius: 5px;
  background: #555;
  color: #ccc;
}
.add svg { width: 6px; height: 6px; }
.tabs .add { margin: 0 0 1px 2px; }

/* Toolbars */
.toolbar {
  display: flex;
  align-items: center;
  gap: 3px;
  height: 13px;
  padding-left: 5px;
  background: #515151;
}
.group { display: flex; align-items: center; }
.group.spaced { gap: 3px; }

.combo {
  position: relative;
  display: flex;
  align-items: center;
  width: 56px;
  height: 10px;
  background: #ececec;
  color: #222;
}
.combo::after {
  position: absolute;
  top: 3px;
  right: 4px;
  width: 3px;
  height: 3px;
  border: solid #777;
  border-width: 0 1px 1px 0;
  transform: rotate(45deg);
  content: "";
  pointer-events: none;
}
.combo select {
  flex: 1;
  min-width: 0;
  height: 10px;
  padding: 0 4px;
  appearance: none;
  line-height: 10px;
}
.combo.workspace { width: 83px; }
.combo.layer { width: 144px; margin-left: -3px; }
.combo.color { width: 71px; }
.combo.color select { padding-left: 9px; }
.combo.linetype { width: 77px; }
.combo.weight { width: 59px; }
.combo.disabled { background: #cfcfcf; color: #888; }
.combo.disabled select { color: #888; opacity: 1; }
.combo.disabled::after { border-color: #bbb; }
.sample { flex: none; width: 28px; height: 1px; margin-left: 4px; background: #333; }
.weight .sample { width: 16px; margin-left: 2px; }
.sample + select { padding: 0 0 0 2px; }

/* Work area */
.main { display: flex; flex: 1; }
.work { display: flex; flex: 1; flex-direction: column; min-width: 0; }
.workspace-row { display: flex; flex: 1; padding-top: 1px; }
.draw-bar { width: 14px; padding-top: 4px; border-right: 2px solid #3d3d3d; }
.stack { display: flex; flex-direction: column; align-items: center; justify-content: space-between; }
.stack.draw { height: 210px; }
.stack.modify { height: 189px; }
.stack.order { height: 66px; margin-top: 4px; }
.stack hr { width: 9px; margin: 0; border: 0; border-top: 1px solid #bbb; }

.viewport {
  display: grid;
  flex: 1;
  grid-template-columns: 1fr 8px;
  grid-template-rows: 1fr 8px;
  min-width: 0;
  background: #f2f2f2;
}
.drawing { display: block; width: 100%; height: 100%; min-height: 346px; background: #000; }
.stamp { fill: #3f8fe8; font: 6px "Liberation Sans", sans-serif; }
.vscroll, .hscroll { display: flex; }
.vscroll { flex-direction: column; }
.vscroll svg, .hscroll svg { width: 8px; height: 8px; fill: none; stroke: #333; }
.thumb { width: 8px; height: 8px; background: #cdcdcd; }
.vscroll .end { margin-top: auto; }
.hscroll .end { margin-left: auto; }
.modify-bar { width: 15px; padding: 4px 2px 0 3px; border-right: 2px solid #525252; }
.modify-bar .stack { background: #646464; }

/* Command line */
.command { display: flex; height: 46px; border-top: 1px solid #777; }
.command-side { width: 12px; padding: 5px 0 0 1px; background: #4b4b4b; color: #eee; }
.command-side svg { width: 6px; height: 6px; }
.command-body { display: flex; flex: 1; flex-direction: column; background: #c8c8c8; color: #222; font: 6px/7px "Liberation Mono", monospace; }
.history { flex: 1; padding: 4px 1px 0; }
.entry { display: flex; align-items: center; height: 11px; padding-left: 2px; background: #fff; }
.entry svg { width: 7px; height: 7px; }
.tick { margin: 2px 3px 0 2px; border: 1px solid transparent; border-top: 2px solid #888; }
.entry input { flex: 1; height: 10px; font-style: italic; }
.entry input::placeholder { color: #999; opacity: 1; }

/* Properties palette */
.properties { width: 92px; padding: 1px 8px 0 4px; border-right: 1px solid #4a4a4a; }
.properties h2 { padding-left: 4px; }
.selection { display: flex; align-items: center; height: 10px; margin: 8px -8px 2px 0; }
.combo.dark { width: 46px; margin-right: 3px; background: #6c6c6c; color: #eee; }
.combo.dark select { padding-left: 1px; }
.combo.dark::after { top: 4px; width: 0; height: 0; border: 2px solid transparent; border-top-color: #ddd; transform: none; }
.properties h3 {
  display: flex;
  justify-content: space-between;
  height: 9px;
  margin-left: 1px;
  padding: 0 3px;
  background: #454545;
  color: #fff;
  font-weight: 700;
}
.properties table { width: 100%; margin: 1px 0 2px; border-collapse: collapse; table-layout: fixed; }
.properties tr { height: 9px; }
.properties th { width: 41px; padding: 0 0 0 13px; font-weight: 400; text-align: left; }
.properties td { padding: 0; white-space: nowrap; }
.properties .swatch { padding-left: 8px; }
.properties .sample { display: inline-block; width: 15px; margin: 0 3px 2px 1px; background: #ccc; }
.properties .blank { background: none; }
.properties .muted { color: #999; }

/* Status bar */
.status {
  display: flex;
  justify-content: space-between;
  height: 14px;
  border-bottom: 1px solid #666;
  background: #3a3a3a;
}
.layouts { display: flex; align-items: flex-start; gap: 3px; padding-left: 6px; }
.layouts a {
  height: 9px;
  padding: 0 5px;
  border-radius: 0 0 4px 4px;
  background: #505050;
  color: #bbb;
}
.layouts .active { background: #7c7c7c; color: #fff; font-weight: 700; }
.layouts .add { height: 9px; }
.status-tools { display: flex; align-items: center; padding: 0 2px; background: #535353; }
.status-tools i { width: 1px; height: 9px; margin: 0 1px; background: #6d6d6d; }
.status-tools button { color: #ddd; }
.status-tools .text { width: auto; padding: 0 2px; }
.status-tools .bold { font-weight: 700; }
```
